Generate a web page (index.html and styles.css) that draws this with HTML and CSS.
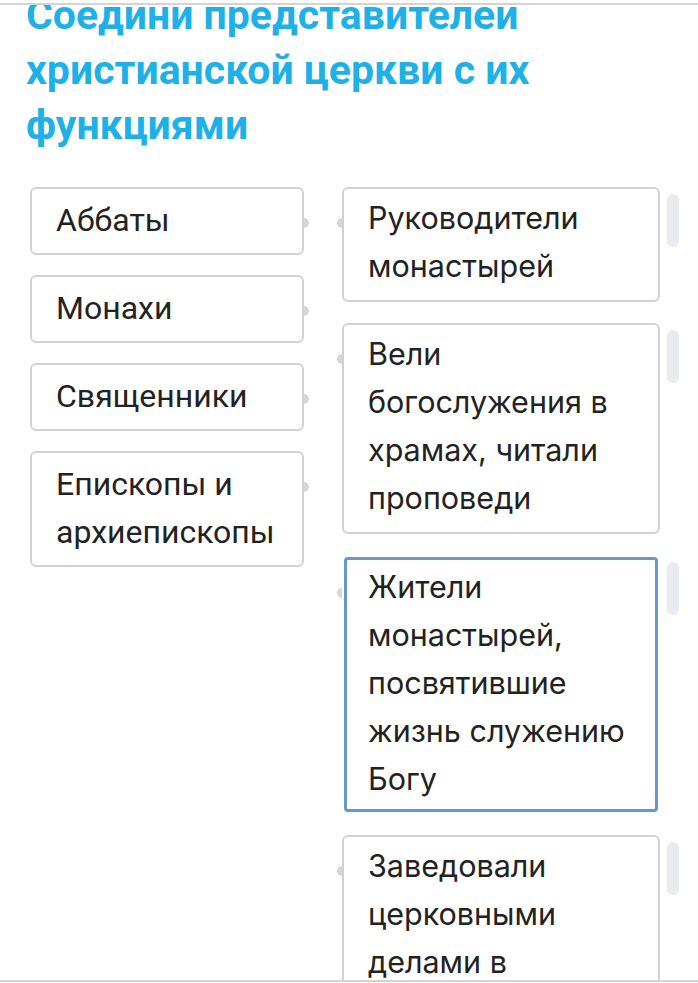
FILE: index.html
```html
<!DOCTYPE html>
<html lang="ru">
<head>
    <meta charset="UTF-8">
    <meta name="viewport" content="width=device-width, initial-scale=1.0">
    <title>Соедини</title>
    <link rel="stylesheet" href="styles.css">
</head>
<body>
    <div class="frame">
        <h2 class="title">Соедини представителей христианской церкви с их функциями</h2>
        <div class="match">
            <div class="col-left">
                <div class="item">Аббаты</div>
                <div class="item">Монахи</div>
                <div class="item">Священники</div>
                <div class="item">Епископы и архиепископы</div>
            </div>
            <div class="col-right">
                <div class="row">
                    <div class="answer">Руководители монастырей</div>
                    <div class="handle"></div>
                </div>
                <div class="row">
                    <div class="answer">Вели богослужения в храмах, читали проповеди</div>
                    <div class="handle"></div>
                </div>
                <div class="row">
                    <div class="answer selected">Жители монастырей, посвятившие жизнь служению Богу</div>
                    <div class="handle"></div>
                </div>
                <div class="row">
                    <div class="answer">Заведовали церковными делами в епархиях</div>
                    <div class="handle"></div>
                </div>
            </div>
        </div>
    </div>
</body>
</html>
```

FILE: styles.css
```css
body {
    margin: 0;
    padding: 0;
    background-color: #fff;
    font-family: Roboto, "Liberation Sans", sans-serif;
    color: #222;
}
.frame {
    margin-top: 3px;
    height: 975px;
    border-top: 2px solid #d4d4d4;
    border-bottom: 2px solid #d4d4d4;
    overflow: hidden;
}
.title {
    margin: -17px 0 0 0;
    padding: 0 100px 0 26px;
    font-size: 41px;
    line-height: 55px;
    font-weight: 700;
    color: #1eb1e7;
}
.match {
    display: flex;
    gap: 38px;
    padding-left: 30px;
    margin-top: 34px;
}
.col-left {
    width: 274px;
    display: flex;
    flex-direction: column;
    gap: 20px;
}
.item {
    position: relative;
    border: 2px solid #d2d2d2;
    border-radius: 6px;
    padding: 7px 16px 9px 24px;
    font-size: 32px;
    line-height: 48px;
}
.item::after {
    content: "";
    position: absolute;
    right: -7px;
    top: 29px;
    width: 5px;
    height: 10px;
    border-radius: 0 5px 5px 0;
    background-color: #d6d6d6;
}
.col-right {
    display: flex;
    flex-direction: column;
    gap: 21px;
}
.row {
    display: flex;
    align-items: flex-start;
    gap: 7px;
}
.answer {
    position: relative;
    width: 318px;
    box-sizing: border-box;
    border: 2px solid #d2d2d2;
    border-radius: 6px;
    padding: 5px 16px 10px 24px;
    font-family: Inter, "Noto Sans", sans-serif;
    font-size: 30.5px;
    line-height: 48px;
}
.answer::before {
    content: "";
    position: absolute;
    left: -7px;
    top: 29px;
    width: 5px;
    height: 10px;
    border-radius: 5px 0 0 5px;
    background-color: #d6d6d6;
}
.answer.selected {
    width: 314px;
    margin: 2px 2px 2px 2px;
    border: 3px solid #6897cb;
    border-radius: 4px;
    padding: 3px 14px 6px 21px;
}
.answer.selected::before {
    left: -10px;
    top: 28px;
}
.handle {
    width: 12px;
    height: 53px;
    margin-top: 7px;
    border-radius: 6px;
    background-color: #e9ebf0;
}
```
